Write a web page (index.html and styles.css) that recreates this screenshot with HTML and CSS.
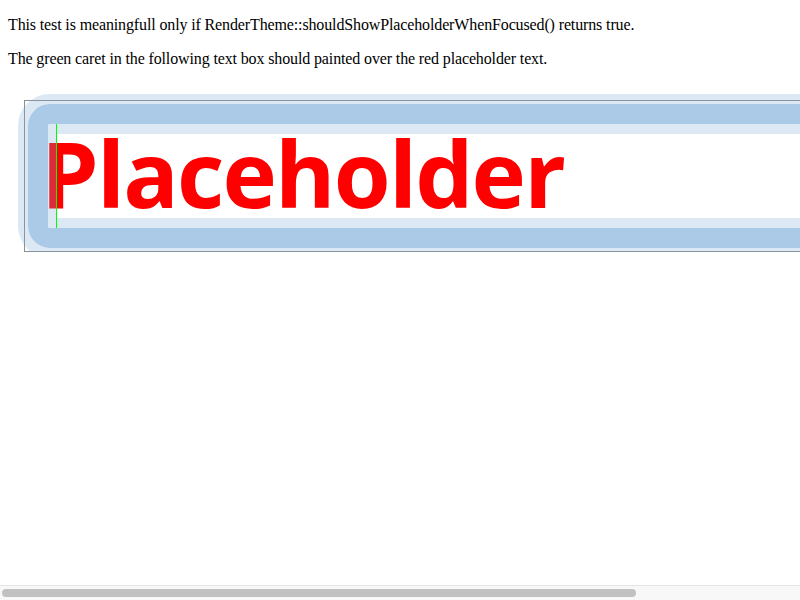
FILE: index.html
```html
<!DOCTYPE html>
<html>
<head>
<meta charset="utf-8">
<link rel="stylesheet" href="styles.css">
</head>
<body>
<div class="page">
  <p>This test is meaningfull only if RenderTheme::shouldShowPlaceholderWhenFocused() returns true.</p>
  <p>The green caret in the following text box should painted over the red placeholder text.</p>
  <div class="field">
    <div class="placeholder">Placeholder</div>
    <div class="ring"><div class="ring-mid"><div class="ring-inner"></div></div></div>
    <div class="caret"></div>
  </div>
</div>
<div class="hscroll"><div class="hscroll-thumb"></div></div>
</body>
</html>
```
FILE: styles.css
```css
html {
  overflow: hidden;
}
body {
  margin: 0;
  font-family: "Liberation Serif", serif;
  font-size: 16px;
  letter-spacing: -0.13px;
  color: #000;
  background: #fff;
}
.page {
  padding: 0 8px;
  width: 1100px;
}
p {
  margin: 16px 0;
}
.field {
  position: relative;
  margin: 32px 0 0 16px;
  width: 1000px;
  height: 152px;
  box-sizing: border-box;
  border: 1px solid #8f8f8f;
  background: #fff;
  padding: 20px 0 0 16px;
}
.placeholder {
  font-family: "Open Sans", sans-serif;
  font-weight: 700;
  font-size: 92px;
  letter-spacing: -1.8px;
  line-height: 104px;
  color: #ff0000;
  white-space: nowrap;
}
.ring {
  position: absolute;
  left: -7px;
  top: -7px;
  right: -7px;
  bottom: -7px;
  border: 10px solid rgba(117, 169, 215, 0.255);
  border-radius: 32px;
}
.ring-mid {
  height: 100%;
  box-sizing: border-box;
  border: 20px solid rgba(117, 169, 215, 0.61);
  border-radius: 22px;
}
.ring-inner {
  height: 100%;
  box-sizing: border-box;
  border: 10px solid rgba(117, 169, 215, 0.255);
  border-left-width: 9px;
  border-radius: 3px;
}
.caret {
  position: absolute;
  left: 31px;
  top: 23px;
  width: 1px;
  height: 104px;
  background: #00ff00;
}
.hscroll {
  position: fixed;
  left: 0;
  right: 0;
  bottom: 0;
  height: 15px;
  box-sizing: border-box;
  background: #f8f8f8;
  border-top: 1px solid #e4e4e4;
  padding: 3px 2px 0;
}
.hscroll-thumb {
  width: 634px;
  height: 8px;
  border-radius: 4px;
  background: #c1c1c1;
}
```
